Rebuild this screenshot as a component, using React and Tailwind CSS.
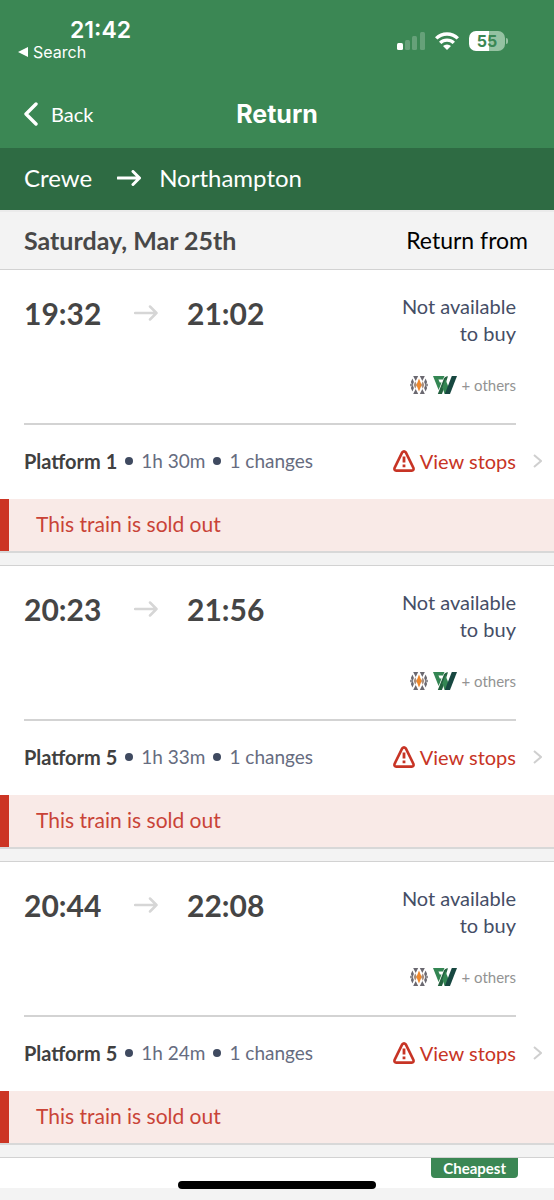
const trains = [
  { depart: "19:32", arrive: "21:02", platform: "Platform 1", duration: "1h 30m" },
  { depart: "20:23", arrive: "21:56", platform: "Platform 5", duration: "1h 33m" },
  { depart: "20:44", arrive: "22:08", platform: "Platform 5", duration: "1h 24m" },
];

function Arrow({ className }) {
  return (
    <svg className={className} viewBox="0 0 24 16" fill="none" stroke="currentColor" strokeLinecap="round" strokeLinejoin="round" aria-hidden="true">
      <path d="M1 8H22.5M16 1.5L22.5 8L16 14.5" />
    </svg>
  );
}

function SignalIcon() {
  return (
    <svg className="h-[18px] w-7" viewBox="0 0 28 18" fill="#fff" aria-hidden="true">
      <rect x="0" y="11" width="6" height="7" rx="1.5" />
      <g fillOpacity="0.22">
        <rect x="8" y="8" width="5" height="10" rx="1.5" />
        <rect x="15" y="4" width="5" height="14" rx="1.5" />
        <rect x="23" y="0" width="5" height="18" rx="1.5" />
      </g>
    </svg>
  );
}

function WifiIcon() {
  return (
    <svg className="h-[18px] w-6" viewBox="0 0 24 18" fill="none" stroke="#fff" strokeWidth="3.4" aria-hidden="true">
      <path d="M1.2 6.4A15.4 15.4 0 0 1 22.8 6.4" />
      <path d="M5.2 10.9A9.7 9.7 0 0 1 18.8 10.9" />
      <path d="M12 18L8 14.1A5.6 5.6 0 0 1 16 14.1Z" fill="#fff" stroke="none" />
    </svg>
  );
}

function Battery() {
  return (
    <div className="flex items-center gap-px">
      <div className="flex h-5 w-9 items-center justify-center rounded-[7px] bg-linear-to-r from-white from-55% to-[#95c2a2] to-55% font-[Inter] text-base leading-5 font-bold text-[#3b8754]">
        55
      </div>
      <div className="h-[6px] w-[2px] rounded-r-full bg-[#95c2a2]" />
    </div>
  );
}

function MidlandsLogo() {
  return (
    <svg className="h-[18px] w-[18px]" viewBox="0 0 18 18" aria-hidden="true">
      <g fill="#6a6870">
        <path d="M3.2 0H8.2L5.7 5Z" />
        <path d="M9.8 0H14.8L12.3 5Z" />
        <path d="M3.2 18H8.2L5.7 13Z" />
        <path d="M9.8 18H14.8L12.3 13Z" />
        <path d="M2.4 2.6L3.9 6L2.4 9.4L.9 6Z" />
        <path d="M2.4 8.6L3.9 12L2.4 15.4L.9 12Z" />
        <path d="M15.6 2.6L17.1 6L15.6 9.4L14.1 6Z" />
        <path d="M15.6 8.6L17.1 12L15.6 15.4L14.1 12Z" />
        <path d="M0 9L1 7.2L2 9L1 10.8Z" />
        <path d="M18 9L17 7.2L16 9L17 10.8Z" />
      </g>
      <path d="M5.3 5.2L7 9L5.3 12.8L3.6 9Z" fill="#a78f80" />
      <path d="M12.7 5.2L14.4 9L12.7 12.8L11 9Z" fill="#a78f80" />
      <path d="M9 2.6L11.6 9L9 15.4L6.4 9Z" fill="#f0892c" />
    </svg>
  );
}

function NorthwesternLogo() {
  return (
    <svg className="h-[18px] w-6" viewBox="0 0 24 18" aria-hidden="true">
      <path d="M0 0H11.5L10 3.6H5.4L6.8 6.6H8.6L5.6 14Z" fill="#348653" />
      <path d="M9 18H4.8L10.4 4C11.2 1.4 12.4 .2 15 .2Z" fill="#24613f" />
      <path d="M12.4 3L15.8 12L13.4 18H11.6L9.4 11.2Z" fill="#348653" />
      <path d="M18.8 0H24L17 18H11.8Z" fill="#174740" />
    </svg>
  );
}

function WarningIcon() {
  return (
    <svg className="h-[22px] w-[22px] shrink-0" viewBox="0 0 22 22" fill="none" stroke="currentColor" aria-hidden="true">
      <path d="M9.2 2.4Q11 .3 12.8 2.4L20.4 17.8Q21.2 20.5 18.7 20.6H3.3Q.8 20.5 1.6 17.8Z" strokeWidth="2.6" strokeLinejoin="round" />
      <path d="M11 6.5V12.6M11 14.4V17.2" strokeWidth="2.8" />
    </svg>
  );
}

function TrainCard({ depart, arrive, platform, duration }) {
  return (
    <li className="border-t border-[#d2d2d2]">
      <article className="bg-white">
        <div className="mr-[38px] ml-6 flex h-[155px] justify-between border-b-2 border-[#d3d3d3] pt-[23px]">
          <div className="flex h-10 items-center text-[30px] leading-10 font-bold text-[#454545]">
            <time className="w-[110px]">{depart}</time>
            <Arrow className="mr-[29px] h-4 w-6 stroke-[2.5] text-[#d6d6d6]" />
            <time>{arrive}</time>
          </div>
          <div className="flex flex-col items-end">
            <p className="w-[124px] text-right text-xl leading-[27px] text-[#454e66]">Not available to buy</p>
            <div className="mt-7 flex items-center gap-[5px]">
              <MidlandsLogo />
              <NorthwesternLogo />
              <span className="text-[15px] leading-5 text-[#939393]">+ others</span>
            </div>
          </div>
        </div>
        <div className="flex h-[72px] items-center justify-between pr-3 pl-6 text-xl leading-7 text-[#666c80]">
          <p className="flex items-center gap-2">
            <strong className="font-bold text-[#404040]">{platform}</strong>
            <span className="size-2 rounded-full bg-[#3f4a60]" />
            <span className="text-[19px]">{duration}</span>
            <span className="size-2 rounded-full bg-[#3f4a60]" />
            <span className="text-[19px]">1 changes</span>
          </p>
          <button type="button" className="flex items-center gap-[5px] text-[#c73425]">
            <WarningIcon />
            View stops
            <svg className="ml-3 h-[14px] w-[9px]" viewBox="0 0 9 14" fill="none" stroke="#cfcfcf" strokeWidth="2" aria-hidden="true">
              <path d="M1 1L8 7L1 13" />
            </svg>
          </button>
        </div>
        <p className="mt-[2px] border-l-[9px] border-[#cc3524] bg-[#f9eae7] pt-[11px] pb-[13px] pl-[27px] text-[21px] leading-7 text-[#c94337]">
          This train is sold out
        </p>
      </article>
      <div className="h-[14px] border-t-2 border-[#d8d8d8] bg-[#f3f3f3]" />
    </li>
  );
}

export default function App() {
  return (
    <div className="flex h-screen flex-col overflow-hidden bg-[#f3f3f3] font-[Lato,sans-serif]">
      <header className="shrink-0 text-white">
        <div className="bg-[#3b8754]">
          <div className="flex h-[82px] items-start justify-between pr-[46px] pl-[18px] font-[Inter,sans-serif]">
            <div className="pt-[18px]">
              <div className="pl-[52px] text-[23px] leading-6 font-semibold">21:42</div>
              <a href="#search" className="flex items-center gap-[5px] text-base leading-5">
                <svg className="h-[10px] w-[10px]" viewBox="0 0 10 10" fill="currentColor" aria-hidden="true">
                  <path d="M0 5L10 0V10Z" />
                </svg>
                Search
              </a>
            </div>
            <div className="flex items-center gap-[10px] pt-[31px]">
              <SignalIcon />
              <WifiIcon />
              <Battery />
            </div>
          </div>
          <div className="grid h-[64px] grid-cols-3 items-center px-6">
            <button type="button" className="flex items-center gap-[13px] justify-self-start text-xl leading-7">
              <svg className="h-6 w-[14px]" viewBox="0 0 14 24" fill="none" stroke="currentColor" strokeWidth="3.4" strokeLinecap="round" strokeLinejoin="round" aria-hidden="true">
                <path d="M12 2L2 12L12 22" />
              </svg>
              Back
            </button>
            <h1 className="text-center font-[Inter,sans-serif] text-[25px] leading-8 font-bold">Return</h1>
          </div>
          <div className="h-[2px]" />
        </div>
        <div className="flex h-[62px] items-center bg-[#2e6b43] px-6 pb-[2px] text-2xl leading-8">
          <span>Crewe</span>
          <Arrow className="mr-[18px] ml-[25px] h-4 w-6 stroke-[3]" />
          <span>Northampton</span>
        </div>
      </header>
      <div className="flex h-[59px] shrink-0 items-center justify-between border-t-2 border-[#ebebeb] bg-[#f3f3f3] pr-[26px] pb-[2px] pl-6 leading-8">
        <h2 className="text-[25px] font-bold text-[#484848]">Saturday, Mar 25th</h2>
        <span className="text-[23px] text-black">Return from</span>
      </div>
      <main className="min-h-0 flex-1 overflow-hidden bg-white">
        <ul>
          {trains.map((train) => (
            <TrainCard key={train.depart} {...train} />
          ))}
          <li className="flex justify-end border-t border-[#d2d2d2] bg-white pr-9">
            <span className="rounded-b-[4px] bg-[#3b8754] px-3 text-[15px] leading-5 font-bold text-white">Cheapest</span>
          </li>
        </ul>
      </main>
      <footer className="relative h-3 shrink-0 bg-[#f3f3f3]">
        <div className="absolute inset-x-0 bottom-[11px] mx-auto h-2 w-[198px] rounded-full bg-black" />
      </footer>
    </div>
  );
}
